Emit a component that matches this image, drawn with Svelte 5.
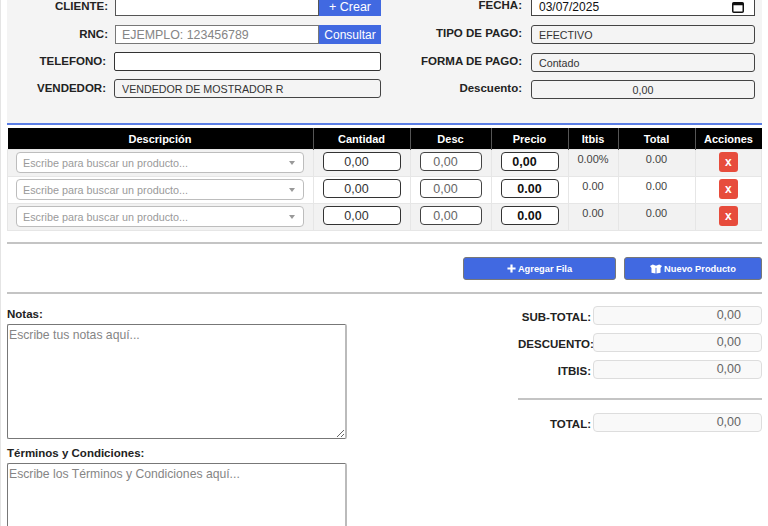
<script>
  const rows = [
    { itbis: '0.00%', precio: '0,00', first: true },
    { itbis: '0.00', precio: '0.00' },
    { itbis: '0.00', precio: '0.00' }
  ];
  const totals = [
    { label: 'SUB-TOTAL:' },
    { label: 'DESCUENTO:' },
    { label: 'ITBIS:' }
  ];
</script>

<div class="page">
  <section class="header-form">
    <div class="col">
      <div class="field first">
        <span class="label l-shift">CLIENTE:</span>
        <div class="joined">
          <input class="plain" type="text" />
          <button class="side crear">+ Crear</button>
        </div>
      </div>
      <div class="field">
        <span class="label l-shift">RNC:</span>
        <div class="joined">
          <input class="plain rnc" type="text" placeholder="EJEMPLO: 123456789" />
          <button class="side">Consultar</button>
        </div>
      </div>
      <div class="field">
        <span class="label">TELEFONO:</span>
        <input class="plain wide round" type="text" />
      </div>
      <div class="field">
        <span class="label">VENDEDOR:</span>
        <input class="readonly" type="text" readonly value="VENDEDOR DE MOSTRADOR R" />
      </div>
    </div>
    <div class="col right">
      <div class="field first">
        <span class="label">FECHA:</span>
        <div class="date">
          <span>03/07/2025</span>
          <svg width="12" height="11" viewBox="0 0 12 11" aria-hidden="true">
            <rect x="0.75" y="0.75" width="10.5" height="9.5" rx="1" fill="none" stroke="#111" stroke-width="1.5" />
            <rect x="0.75" y="0.75" width="10.5" height="2.5" fill="#111" />
          </svg>
        </div>
      </div>
      <div class="field second">
        <span class="label">TIPO DE PAGO:</span>
        <input class="readonly" type="text" readonly value="EFECTIVO" />
      </div>
      <div class="field">
        <span class="label">FORMA DE PAGO:</span>
        <input class="readonly" type="text" readonly value="Contado" />
      </div>
      <div class="field">
        <span class="label">Descuento:</span>
        <input class="readonly center" type="text" readonly value="0,00" />
      </div>
    </div>
  </section>

  <table class="items">
    <thead>
      <tr>
        <th class="c-desc">Descripción</th>
        <th class="c-cant">Cantidad</th>
        <th class="c-dto">Desc</th>
        <th class="c-prec">Precio</th>
        <th class="c-itb">Itbis</th>
        <th class="c-tot">Total</th>
        <th>Acciones</th>
      </tr>
    </thead>
    <tbody>
      {#each rows as row}
        <tr>
          <td>
            <div class="search">
              <span>Escribe para buscar un producto...</span>
              <i class="caret"></i>
            </div>
          </td>
          <td><input class="num cant" type="text" value="0,00" /></td>
          <td><input class="num dto" type="text" value="0,00" /></td>
          <td><input class="num prec" class:first-prec={row.first} type="text" value={row.precio} /></td>
          <td class="val">{row.itbis}</td>
          <td class="val">0.00</td>
          <td><button class="del">x</button></td>
        </tr>
      {/each}
    </tbody>
  </table>

  <hr class="rule first-rule" />

  <div class="actions">
    <button class="primary add">
      <svg width="9" height="9" viewBox="0 0 10 10" aria-hidden="true">
        <path d="M5 0.5v9M0.5 5h9" stroke="#fff" stroke-width="2.4" fill="none" />
      </svg>
      Agregar Fila
    </button>
    <button class="primary new">
      <svg width="12" height="10" viewBox="0 0 13 10" aria-hidden="true">
        <path d="M0 1.8 3 0l3.5 1.6L10 0l3 1.8-1.6 2V9l-4.4 1V3.6L6.5 4 6 3.6V10L1.6 9V3.8z" fill="#fff" />
      </svg>
      Nuevo Producto
    </button>
  </div>

  <hr class="rule" />

  <section class="bottom">
    <div class="notes">
      <label class="note-label" for="notas">Notas:</label>
      <textarea id="notas" class="n1" placeholder="Escribe tus notas aquí..."></textarea>
      <label class="note-label terms" for="terminos">Términos y Condiciones:</label>
      <textarea id="terminos" class="n2" placeholder="Escribe los Términos y Condiciones aquí..."></textarea>
    </div>
    <div class="totals">
      {#each totals as t}
        <div class="total-row">
          <span class="t-label">{t.label}</span>
          <div class="t-val">0,00</div>
        </div>
      {/each}
      <hr class="rule t-rule" />
      <div class="total-row">
        <span class="t-label">TOTAL:</span>
        <div class="t-val">0,00</div>
      </div>
    </div>
  </section>
</div>

<style>
  :global(body) {
    margin: 0;
    background: #fff;
    overflow: hidden;
  }

  .page {
    box-sizing: border-box;
    width: 768px;
    height: 526px;
    overflow: hidden;
    padding-left: 6px;
    border-left: 1px solid #e4e4e4;
    font-family: "Liberation Sans", Arial, sans-serif;
    color: #222;
  }

  .header-form {
    display: flex;
    box-sizing: border-box;
    width: 755px;
    height: 125px;
    background: #f4f4f4;
    border-bottom: 2px solid #5b7ee5;
    overflow: hidden;
  }

  .col {
    width: 375px;
    display: flex;
    flex-direction: column;
    margin-top: -3px;
  }

  .right {
    width: 380px;
  }

  .field {
    display: flex;
    align-items: flex-start;
    height: 19px;
    margin-bottom: 8px;
  }

  .field.first {
    margin-bottom: 9px;
  }

  .field.second {
    margin-bottom: 9px;
  }

  .label {
    width: 99px;
    flex: none;
    text-align: right;
    font-size: 11.5px;
    font-weight: bold;
    line-height: 15px;
    padding-top: 2px;
    margin-right: 8px;
    color: #222;
  }

  .l-shift {
    width: 101px;
    margin-right: 7px;
  }

  .right .label {
    width: 140px;
    margin-right: 9px;
    padding-top: 1px;
  }

  input {
    font-family: inherit;
    box-sizing: border-box;
    outline: none;
  }

  .joined {
    display: flex;
    width: 266px;
    height: 19px;
  }

  .plain {
    flex: 1;
    min-width: 0;
    height: 19px;
    border: 1px solid #555;
    background: #fff;
    padding: 0 6px;
    font-size: 12.4px;
  }

  .rnc {
    border-color: #777;
  }

  .rnc::placeholder {
    color: #858585;
    opacity: 1;
  }

  .wide {
    flex: none;
    width: 267px;
  }

  .round {
    border: 1px solid #333;
    border-radius: 2px;
  }

  .side {
    flex: none;
    width: 62px;
    height: 19px;
    border: none;
    padding: 0;
    background: #4169e1;
    color: #fff;
    font-family: inherit;
    font-size: 12px;
  }

  .crear {
    font-size: 12.5px;
  }

  .readonly {
    width: 267px;
    height: 19px;
    border: 1px solid #444;
    border-radius: 3px;
    background: #f4f4f4;
    padding: 0 7px;
    font-size: 10.7px;
    color: #333;
  }

  .right .readonly {
    width: 224px;
  }

  .center {
    text-align: center;
  }

  .date {
    box-sizing: border-box;
    width: 224px;
    height: 19px;
    border: 1px solid #444;
    background: #fff;
    display: flex;
    align-items: center;
    justify-content: space-between;
    padding: 1px 10px 0 7px;
    font-size: 12px;
    color: #111;
  }

  .items {
    margin-top: 3px;
    width: 755px;
    table-layout: fixed;
    border-collapse: collapse;
    font-size: 11px;
  }

  th {
    height: 21px;
    padding: 0;
    background: #000;
    color: #fff;
    font-size: 11px;
    font-weight: bold;
    border-left: 1px solid #555;
  }

  th:first-child {
    border-left: none;
  }

  .c-desc { width: 305px; }
  .c-cant { width: 96px; }
  .c-dto { width: 80px; }
  .c-prec { width: 76px; }
  .c-itb { width: 49px; }
  .c-tot { width: 76px; }

  td {
    box-sizing: border-box;
    height: 27px;
    padding: 2px 0 0;
    border: 1px solid #e6e6e6;
    text-align: center;
    vertical-align: top;
  }

  tbody tr:nth-child(odd) {
    background: #f2f2f2;
  }

  .search {
    box-sizing: border-box;
    width: 288px;
    height: 21px;
    margin-left: 8px;
    display: flex;
    align-items: center;
    justify-content: space-between;
    padding: 0 8px 0 6px;
    background: #fff;
    border: 1px solid #bdbdbd;
    border-radius: 4px;
    color: #9a9a9a;
    font-size: 10.8px;
  }

  .caret {
    width: 0;
    height: 0;
    border-left: 3.5px solid transparent;
    border-right: 3.5px solid transparent;
    border-top: 4px solid #999;
  }

  .num {
    display: block;
    height: 19px;
    margin: 0 auto;
    border: 1px solid #333;
    border-radius: 4px;
    background: #fff;
    padding: 0;
    text-align: center;
    font-size: 12.5px;
    color: #333;
  }

  .cant {
    width: 78px;
    padding-right: 10px;
  }

  .dto {
    width: 62px;
    padding-right: 10px;
    color: #666;
    border-color: #444;
  }

  .prec {
    width: 58px;
    font-weight: bold;
    color: #111;
  }

  .first-prec {
    padding-right: 10px;
  }

  .val {
    padding-top: 3px;
    font-size: 11px;
    line-height: 13px;
    color: #444;
  }

  .del {
    display: block;
    width: 19px;
    height: 20px;
    margin: 0 auto;
    border: none;
    border-radius: 3px;
    padding: 0;
    background: #e74c3c;
    color: #fff;
    font-family: inherit;
    font-size: 12px;
    font-weight: bold;
  }

  .rule {
    margin: 0;
    height: 0;
    border: none;
    border-top: 2px solid #c4c4c4;
    width: 755px;
  }

  .first-rule {
    margin-top: 11px;
  }

  .actions {
    display: flex;
    justify-content: flex-end;
    gap: 8px;
    width: 755px;
    margin: 13px 0 12px;
  }

  .primary {
    box-sizing: border-box;
    height: 23px;
    display: flex;
    align-items: center;
    justify-content: center;
    gap: 2px;
    border: 1px solid #777;
    border-radius: 3px;
    background: #4169e1;
    color: #fff;
    font-family: inherit;
    font-size: 9.3px;
    font-weight: bold;
    padding: 0;
  }

  .add { width: 153px; }
  .new { width: 138px; }

  .bottom {
    display: flex;
    justify-content: space-between;
    width: 755px;
  }

  .notes {
    width: 340px;
    padding-top: 13px;
  }

  .note-label {
    display: block;
    font-size: 11.5px;
    font-weight: bold;
    line-height: 15px;
    color: #222;
    height: 15px;
    margin-bottom: 2px;
  }

  textarea {
    display: block;
    box-sizing: border-box;
    width: 340px;
    border: 1px solid #777;
    border-right: 2px solid #bbb;
    border-radius: 2px;
    padding: 3px 1px 2px;
    margin: 0;
    font-family: inherit;
    font-size: 12.2px;
  }

  textarea::placeholder {
    color: #858585;
    opacity: 1;
  }

  .n1 { height: 115px; }
  .n2 { height: 120px; }

  .terms {
    margin-top: 7px;
  }

  .totals {
    width: 244px;
    padding-top: 12px;
    display: flex;
    flex-direction: column;
  }

  .total-row {
    display: flex;
    align-items: center;
    height: 19px;
    margin-bottom: 8px;
  }

  .t-label {
    box-sizing: border-box;
    width: 75px;
    height: 19px;
    padding: 2px 2px 0 0;
    flex: none;
    text-align: right;
    font-size: 11.5px;
    font-weight: bold;
    white-space: nowrap;
    color: #222;
    line-height: 19px;
  }

  .t-val {
    box-sizing: border-box;
    width: 169px;
    height: 19px;
    line-height: 17px;
    border: 1px solid #ddd;
    border-radius: 4px;
    background: #f9f9f9;
    padding-right: 20px;
    text-align: right;
    font-size: 12.5px;
    color: #666;
  }

  .t-rule {
    width: 244px;
    margin: 11px 0 13px;
  }
</style>
